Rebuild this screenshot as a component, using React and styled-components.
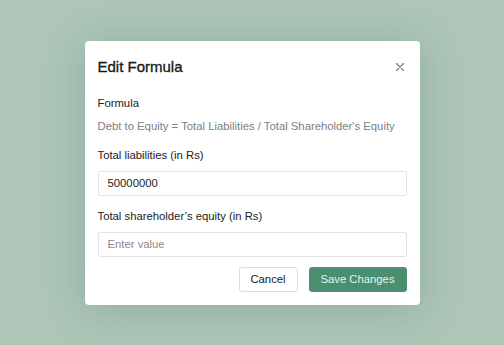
import React from "react";
import styled, { createGlobalStyle } from "styled-components";

const Global = createGlobalStyle`
  html, body { margin: 0; padding: 0; }
  body { font-family: "Liberation Sans", Arial, sans-serif; background: #adc6b8; }
`;

const Backdrop = styled.div`
  width: 504px;
  height: 345px;
  display: flex;
  align-items: center;
  justify-content: center;
  background: #adc6b8;
`;

const Modal = styled.div`
  width: 335px;
  box-sizing: border-box;
  background: #fff;
  border-radius: 4px;
  padding: 16px 13px 13px;
  box-shadow: 0 4px 40px rgba(60, 90, 75, 0.25);
  display: flex;
  flex-direction: column;
`;

const Header = styled.div`
  display: flex;
  align-items: center;
  justify-content: space-between;
  margin-bottom: 18px;
`;

const Title = styled.h2`
  margin: 0;
  font-size: 15px;
  line-height: 20px;
  font-weight: 400;
  -webkit-text-stroke: 0.35px #1a1a1a;
  color: #1a1a1a;
`;

const Close = styled.button`
  border: 0;
  background: none;
  padding: 0;
  width: 10px;
  height: 10px;
  margin-right: 2px;
  display: flex;
  cursor: pointer;
`;

const Label = styled.div`
  font-size: 11.3px;
  line-height: 16px;
  color: #222;
  margin-bottom: ${(p) => p.$mb}px;
`;

const Formula = styled.div`
  font-size: 11.3px;
  line-height: 16px;
  color: #808080;
  margin-bottom: 13px;
`;

const Input = styled.input`
  box-sizing: border-box;
  width: 100%;
  height: 25px;
  border: 1px solid #e3e3e3;
  border-radius: 2px;
  padding: 0 9px;
  font-family: inherit;
  font-size: 11.3px;
  color: #222;
  margin-bottom: ${(p) => p.$mb}px;
  outline: none;
  &::placeholder { color: #8a8a8a; }
`;

const Actions = styled.div`
  display: flex;
  justify-content: flex-end;
  gap: 11px;
`;

const Button = styled.button`
  height: 25px;
  box-sizing: border-box;
  border-radius: 3px;
  font-family: inherit;
  font-size: 11.3px;
  padding: 0;
  white-space: nowrap;
  border: 1px solid ${(p) => (p.$primary ? "#4a8f6f" : "#dcdcdc")};
  background: ${(p) => (p.$primary ? "#4a8f6f" : "#fff")};
  color: ${(p) => (p.$primary ? "#e8f2ec" : "#1a1a1a")};
  width: ${(p) => p.$w}px;
  cursor: pointer;
`;

export default function App() {
  return (
    <>
      <Global />
      <Backdrop>
        <Modal>
          <Header>
            <Title>Edit Formula</Title>
            <Close aria-label="Close">
              <svg width="10" height="10" viewBox="0 0 10 10">
                <path d="M1.5 1.5L8.5 8.5M8.5 1.5L1.5 8.5" stroke="#777" strokeWidth="1.1" strokeLinecap="round" />
              </svg>
            </Close>
          </Header>
          <Label $mb={7}>Formula</Label>
          <Formula>Debt to Equity = Total Liabilities / Total Shareholder's Equity</Formula>
          <Label $mb={8}>Total liabilities (in Rs)</Label>
          <Input $mb={12} defaultValue="50000000" />
          <Label $mb={8}>Total shareholder’s equity (in Rs)</Label>
          <Input $mb={10} placeholder="Enter value" />
          <Actions>
            <Button $w={59}>Cancel</Button>
            <Button $primary $w={98}>Save Changes</Button>
          </Actions>
        </Modal>
      </Backdrop>
    </>
  );
}
